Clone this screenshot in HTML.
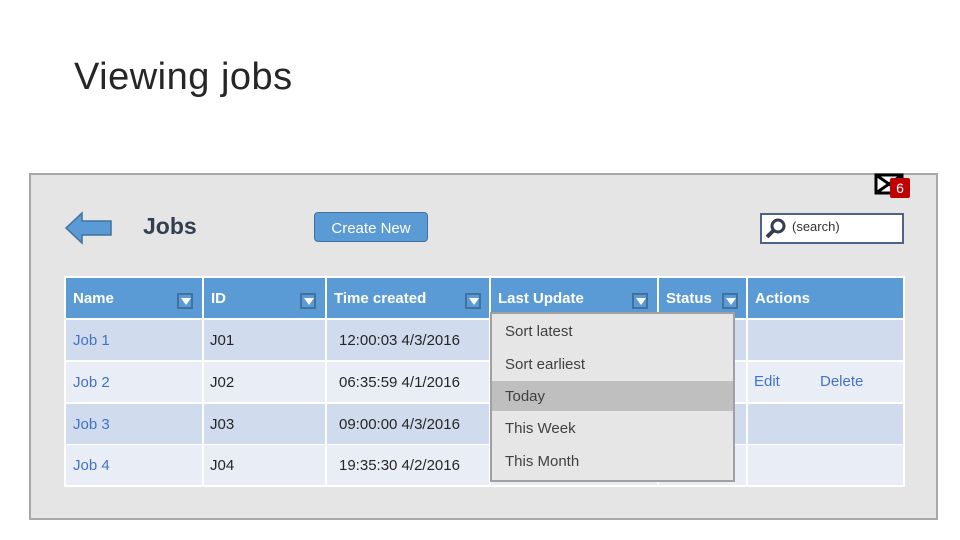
<html><head><style>
body{margin:0;width:960px;height:540px;background:#fff;position:relative;font-family:"Liberation Sans","DejaVu Sans",sans-serif;overflow:hidden}
.a{position:absolute}
.h{position:absolute;top:278px;height:40px;background:#5b9bd5;color:#fff;font-weight:bold;font-size:15px;line-height:42px;padding-left:7px;box-sizing:border-box}
.c{position:absolute;height:40px;font-size:15px;line-height:42px;box-sizing:border-box;color:#2f3d57}
.r1{background:#d0dbee}.r2{background:#e9edf6}
.dd{position:absolute;width:16px;height:16px;top:293px;background:#5b9bd5;border:2px solid #41719c;box-sizing:border-box}
.dd:after{content:"";position:absolute;left:2px;top:3px;border-left:5px solid transparent;border-right:5px solid transparent;border-top:7px solid #fff}
.m{position:absolute;left:13px;font-size:15px;color:#404040}
</style></head><body>
<div class="a" style="left:74px;top:56px;font-size:38px;color:#262626;font-weight:300;letter-spacing:0.5px">Viewing jobs</div>
<div class="a" style="left:29px;top:173px;width:905px;height:343px;background:#e5e5e5;border:2px solid #a8a8a8"></div>
<div class="a" style="left:64px;top:276px;width:841px;height:211px;background:#fff"></div>
<svg class="a" style="left:64px;top:210px" width="50" height="36"><path d="M2 18 L18 3 L18 11 L47 11 L47 25 L18 25 L18 33 Z" fill="#5b9bd5" stroke="#41719c" stroke-width="1.5"/></svg>
<div class="a" style="left:143px;top:213px;font-size:23px;color:#333f50;font-weight:bold">Jobs</div>
<div class="a" style="left:314px;top:212px;width:114px;height:30px;background:#5b9bd5;border:1px solid #41719c;border-radius:4px;color:#fff;font-size:15px;text-align:center;line-height:31px;box-sizing:border-box">Create New</div>
<div class="a" style="left:760px;top:213px;width:144px;height:31px;background:#fff;border:2px solid #4b6488;box-sizing:border-box"></div>
<svg class="a" style="left:764px;top:217px" width="24" height="22"><circle cx="14" cy="9" r="6" fill="none" stroke="#333f50" stroke-width="3"/><path d="M10 13 L3 20" stroke="#333f50" stroke-width="4"/></svg>
<div class="a" style="left:792px;top:219px;font-size:13px;color:#333">(search)</div>
<svg class="a" style="left:874px;top:173px" width="30" height="26"><rect x="2" y="2" width="26" height="18" fill="#fff" stroke="#000" stroke-width="3"/><path d="M2 2 L28 20 M28 2 L2 20" stroke="#000" stroke-width="3"/></svg>
<div class="a" style="left:890px;top:178px;width:20px;height:20px;background:#c00000;color:#fff;font-size:14px;text-align:center;line-height:21px;border-radius:2px">6</div>
<div class="h" style="left:66px;width:136px">Name</div>
<div class="h" style="left:204px;width:121px">ID</div>
<div class="h" style="left:327px;width:162px">Time created</div>
<div class="h" style="left:491px;width:166px">Last Update</div>
<div class="h" style="left:659px;width:87px">Status</div>
<div class="h" style="left:748px;width:155px">Actions</div>
<div class="dd" style="left:177px"></div><div class="dd" style="left:300px"></div><div class="dd" style="left:465px"></div><div class="dd" style="left:632px"></div><div class="dd" style="left:722px"></div>
<div id="rows"></div>
<script>
var d=[["Job 1","J01","12:00:03 4/3/2016"],["Job 2","J02","06:35:59 4/1/2016"],["Job 3","J03","09:00:00 4/3/2016"],["Job 4","J04","19:35:30 4/2/2016"]];
var ys=[320,362,404,445],cols=[[66,136],[204,121],[327,162],[491,166],[659,87],[748,155]],h="";
d.forEach(function(r,i){var cl=i%2?"r2":"r1";cols.forEach(function(c,j){var t=j<3?r[j]:"";var pl=j==0?7:(j==1?6:12);var col=j==0?"#4472c4":"#262626";h+='<div class="c '+cl+'" style="left:'+c[0]+'px;top:'+ys[i]+'px;width:'+c[1]+'px;padding-left:'+pl+'px;color:'+col+'">'+t+'</div>';});});
document.getElementById("rows").innerHTML=h;
</script>
<div class="a" style="left:754px;top:373px;font-size:15px;color:#4472c4">Edit</div>
<div class="a" style="left:820px;top:373px;font-size:15px;color:#4472c4">Delete</div>
<div class="a" style="left:490px;top:312px;width:245px;height:170px;background:#e6e6e6;border:2px solid #a0a0a0;box-sizing:border-box">
<div class="a" style="left:0;top:67px;width:241px;height:30px;background:#bfbfbf"></div>
<div class="m" style="top:9px">Sort latest</div>
<div class="m" style="top:42px">Sort earliest</div>
<div class="m" style="top:74px">Today</div>
<div class="m" style="top:106px">This Week</div>
<div class="m" style="top:139px">This Month</div>
</div>
</body></html>
